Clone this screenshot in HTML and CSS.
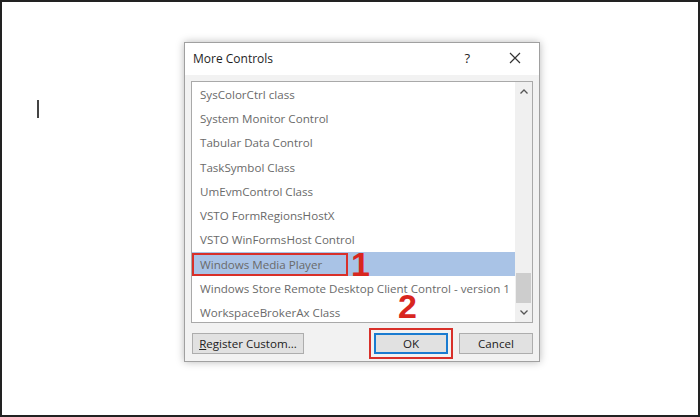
FILE: index.html
```html
<!DOCTYPE html>
<html>
<head>
<meta charset="utf-8">
<link rel="stylesheet" href="styles.css">
</head>
<body>
<div class="frame">
  <div class="caret"></div>
  <div class="dialog">
    <div class="titlebar">
      <span class="title">More Controls</span>
      <span class="help">?</span>
      <svg class="close" width="12" height="12" viewBox="0 0 12 12"><path d="M1 1 L11 11 M11 1 L1 11" stroke="#333" stroke-width="1.2" fill="none"/></svg>
    </div>
    <div class="body">
      <div class="listbox">
        <div class="items">
          <div class="item">SysColorCtrl class</div>
          <div class="item">System Monitor Control</div>
          <div class="item">Tabular Data Control</div>
          <div class="item">TaskSymbol Class</div>
          <div class="item">UmEvmControl Class</div>
          <div class="item">VSTO FormRegionsHostX</div>
          <div class="item">VSTO WinFormsHost Control</div>
          <div class="item selected"><span class="mark">Windows Media Player</span><span class="num">1</span></div>
          <div class="item">Windows Store Remote Desktop Client Control - version 1</div>
          <div class="item">WorkspaceBrokerAx Class</div>
        </div>
        <div class="scrollbar">
          <svg class="arrow" width="8" height="5" viewBox="0 0 8 5"><path d="M0.5 4.5 L4 1 L7.5 4.5" stroke="#555" stroke-width="1.3" fill="none"/></svg>
          <div class="track"><div class="thumb"></div></div>
          <svg class="arrow" width="8" height="5" viewBox="0 0 8 5"><path d="M0.5 0.5 L4 4 L7.5 0.5" stroke="#555" stroke-width="1.3" fill="none"/></svg>
        </div>
      </div>
      <div class="buttons">
        <button class="btn reg"><u>R</u>egister Custom...</button>
        <span class="spacer"></span>
        <button class="btn ok">OK</button>
        <button class="btn cancel">Cancel</button>
      </div>
      <span class="num two">2</span>
    </div>
  </div>
</div>
</body>
</html>
```

FILE: styles.css
```css
html, body {
  margin: 0;
  padding: 0;
  background: #fff;
}
.frame {
  box-sizing: border-box;
  width: 700px;
  height: 417px;
  border: 2px solid #222;
  display: flex;
  align-items: flex-start;
  font-family: "Open Sans", "Noto Sans", sans-serif;
}
.caret {
  width: 2px;
  height: 18px;
  background: #444;
  margin-left: 35px;
  margin-top: 98px;
}
.dialog {
  margin-left: 145px;
  margin-top: 40px;
  width: 356px;
  height: 320px;
  box-sizing: border-box;
  border: 1px solid #a0a0a0;
  background: #f2f2f2;
  box-shadow: 0 0 8px rgba(0,0,0,0.28);
  display: flex;
  flex-direction: column;
}
.titlebar {
  height: 32px;
  background: #fff;
  display: flex;
  align-items: center;
  padding-left: 8px;
  padding-bottom: 2px;
  box-sizing: border-box;
}
.title {
  font-size: 12px;
  color: #1e1e1e;
  flex: 1;
}
.help {
  font-size: 13px;
  color: #222;
  margin-right: 39px;
}
.close {
  margin-right: 18px;
}
.body {
  position: relative;
  flex: 1;
  padding: 6px 6px 0 6px;
  display: flex;
  flex-direction: column;
}
.listbox {
  height: 242px;
  box-sizing: border-box;
  border: 1px solid #a9a9a9;
  background: #fff;
  display: flex;
  overflow: hidden;
}
.items {
  flex: 1;
  overflow: hidden;
}
.item {
  height: 24.3px;
  display: flex;
  align-items: center;
  padding-left: 8px;
  font-size: 11.6px;
  color: #6a6a6a;
  white-space: nowrap;
}
.item.selected {
  background: #a9c3e6;
  padding-left: 0;
  height: 24px;
}
.mark {
  box-sizing: border-box;
  width: 156px;
  height: 23px;
  border: 2px solid #d8302a;
  padding-left: 6px;
  display: flex;
  align-items: center;
}
.num {
  font-family: "Liberation Sans", sans-serif;
  font-weight: bold;
  font-size: 34px;
  line-height: 24px;
  color: #d8261f;
  margin-left: 3px;
}
.scrollbar {
  width: 17px;
  background: #f0f0f0;
  display: flex;
  flex-direction: column;
  align-items: center;
}
.arrow {
  margin: 7px 0;
}
.track {
  flex: 1;
  width: 100%;
  display: flex;
  flex-direction: column;
  justify-content: flex-end;
}
.thumb {
  height: 30px;
  margin: 0 1px;
  background: #cdcdcd;
}
.buttons {
  display: flex;
  margin-top: 10px;
  padding-left: 1px;
}
.btn {
  height: 21px;
  box-sizing: border-box;
  border: 1px solid #adadad;
  background: #e1e1e1;
  font-family: "Open Sans", "Noto Sans", sans-serif;
  font-size: 11.6px;
  color: #222;
  padding: 0;
  display: flex;
  align-items: center;
  justify-content: center;
}
.reg {
  width: 112px;
}
.spacer {
  flex: 1;
}
.ok {
  width: 74px;
  border: 2px solid #1a7bd0;
  outline: 2.5px solid #d8302a;
  outline-offset: 3px;
}
.cancel {
  width: 74px;
  margin-left: 11px;
}
.two {
  position: absolute;
  left: 213px;
  top: 217px;
  line-height: 28px;
  margin: 0;
}
```
